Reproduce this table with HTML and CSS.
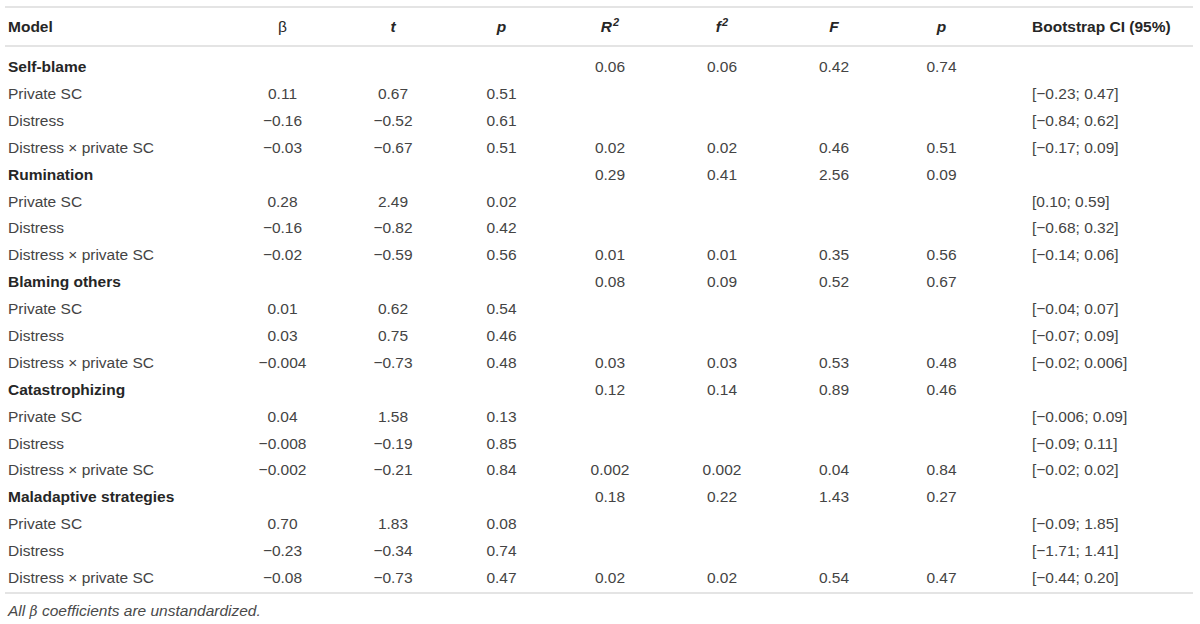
FILE: index.html
```html
<!DOCTYPE html>
<html>
<head>
<meta charset="utf-8">
<link rel="stylesheet" href="styles.css">
</head>
<body>
<div class="wrap">
<table class="tbl">
<colgroup>
<col class="c-model"><col class="c-b"><col class="c-t"><col class="c-p"><col class="c-r"><col class="c-f2"><col class="c-F"><col class="c-p2"><col class="c-ci">
</colgroup>
<thead>
<tr>
<th class="l">Model</th><th class="reg">β</th><th class="it">t</th><th class="it">p</th><th class="it">R<sup>2</sup></th><th class="it">f<sup>2</sup></th><th class="it">F</th><th class="it">p</th><th class="ci">Bootstrap CI (95%)</th>
</tr>
</thead>
<tbody>
<tr class="grp first"><td class="l">Self-blame</td><td></td><td></td><td></td><td>0.06</td><td>0.06</td><td>0.42</td><td>0.74</td><td class="ci"></td></tr>
<tr><td class="l">Private SC</td><td>0.11</td><td>0.67</td><td>0.51</td><td></td><td></td><td></td><td></td><td class="ci">[−0.23; 0.47]</td></tr>
<tr><td class="l">Distress</td><td>−0.16</td><td>−0.52</td><td>0.61</td><td></td><td></td><td></td><td></td><td class="ci">[−0.84; 0.62]</td></tr>
<tr><td class="l">Distress × private SC</td><td>−0.03</td><td>−0.67</td><td>0.51</td><td>0.02</td><td>0.02</td><td>0.46</td><td>0.51</td><td class="ci">[−0.17; 0.09]</td></tr>
<tr class="grp"><td class="l">Rumination</td><td></td><td></td><td></td><td>0.29</td><td>0.41</td><td>2.56</td><td>0.09</td><td class="ci"></td></tr>
<tr><td class="l">Private SC</td><td>0.28</td><td>2.49</td><td>0.02</td><td></td><td></td><td></td><td></td><td class="ci">[0.10; 0.59]</td></tr>
<tr><td class="l">Distress</td><td>−0.16</td><td>−0.82</td><td>0.42</td><td></td><td></td><td></td><td></td><td class="ci">[−0.68; 0.32]</td></tr>
<tr><td class="l">Distress × private SC</td><td>−0.02</td><td>−0.59</td><td>0.56</td><td>0.01</td><td>0.01</td><td>0.35</td><td>0.56</td><td class="ci">[−0.14; 0.06]</td></tr>
<tr class="grp"><td class="l">Blaming others</td><td></td><td></td><td></td><td>0.08</td><td>0.09</td><td>0.52</td><td>0.67</td><td class="ci"></td></tr>
<tr><td class="l">Private SC</td><td>0.01</td><td>0.62</td><td>0.54</td><td></td><td></td><td></td><td></td><td class="ci">[−0.04; 0.07]</td></tr>
<tr><td class="l">Distress</td><td>0.03</td><td>0.75</td><td>0.46</td><td></td><td></td><td></td><td></td><td class="ci">[−0.07; 0.09]</td></tr>
<tr><td class="l">Distress × private SC</td><td>−0.004</td><td>−0.73</td><td>0.48</td><td>0.03</td><td>0.03</td><td>0.53</td><td>0.48</td><td class="ci">[−0.02; 0.006]</td></tr>
<tr class="grp"><td class="l">Catastrophizing</td><td></td><td></td><td></td><td>0.12</td><td>0.14</td><td>0.89</td><td>0.46</td><td class="ci"></td></tr>
<tr><td class="l">Private SC</td><td>0.04</td><td>1.58</td><td>0.13</td><td></td><td></td><td></td><td></td><td class="ci">[−0.006; 0.09]</td></tr>
<tr><td class="l">Distress</td><td>−0.008</td><td>−0.19</td><td>0.85</td><td></td><td></td><td></td><td></td><td class="ci">[−0.09; 0.11]</td></tr>
<tr><td class="l">Distress × private SC</td><td>−0.002</td><td>−0.21</td><td>0.84</td><td>0.002</td><td>0.002</td><td>0.04</td><td>0.84</td><td class="ci">[−0.02; 0.02]</td></tr>
<tr class="grp"><td class="l">Maladaptive strategies</td><td></td><td></td><td></td><td>0.18</td><td>0.22</td><td>1.43</td><td>0.27</td><td class="ci"></td></tr>
<tr><td class="l">Private SC</td><td>0.70</td><td>1.83</td><td>0.08</td><td></td><td></td><td></td><td></td><td class="ci">[−0.09; 1.85]</td></tr>
<tr><td class="l">Distress</td><td>−0.23</td><td>−0.34</td><td>0.74</td><td></td><td></td><td></td><td></td><td class="ci">[−1.71; 1.41]</td></tr>
<tr class="last"><td class="l">Distress × private SC</td><td>−0.08</td><td>−0.73</td><td>0.47</td><td>0.02</td><td>0.02</td><td>0.54</td><td>0.47</td><td class="ci">[−0.44; 0.20]</td></tr>
</tbody>
</table>
<p class="note">All <span class="beta">β</span> coefficients are unstandardized.</p>
</div>
</body>
</html>
```
FILE: styles.css
```css
html, body {
  margin: 0;
  padding: 0;
  background: #ffffff;
}
body {
  font-family: "Liberation Sans", Arial, sans-serif;
  color: #444444;
  font-size: 15.5px;
}
.wrap {
  padding: 6px 7px 0 5px;
}
.tbl {
  width: 1188px;
  table-layout: fixed;
  border-collapse: collapse;
  border-top: 2px solid #e4e4e4;
  border-bottom: 2px solid #e4e4e4;
}
.c-model { width: 222px; }
.c-b { width: 111px; }
.c-t { width: 110px; }
.c-p { width: 107px; }
.c-r { width: 110px; }
.c-f2 { width: 114px; }
.c-F { width: 110px; }
.c-p2 { width: 105px; }
.c-ci { width: 199px; }
th {
  height: 37px;
  padding: 0;
  font-weight: bold;
  color: #262626;
  text-align: center;
  border-bottom: 2px solid #e4e4e4;
  vertical-align: middle;
}
th.reg { font-weight: normal; }
th.it { font-style: italic; }
th sup {
  font-size: 11px;
  line-height: 0;
  vertical-align: 6px;
  margin-left: 1px;
}
td {
  height: 26.9px;
  padding: 0;
  text-align: center;
  vertical-align: middle;
  white-space: nowrap;
}
.l {
  text-align: left;
  padding-left: 3px;
}
.ci {
  text-align: left;
  padding-left: 38px;
}
.grp td.l {
  font-weight: bold;
  color: #262626;
}
.first td {
  height: 26.5px;
  padding-top: 7px;
}
.last td {
  height: 27.5px;
}
.note {
  margin: 0;
  padding: 8px 0 0 3px;
  font-size: 15.5px;
  font-style: italic;
  color: #4a4a4a;
}
.beta {
  font-family: "DejaVu Serif", serif;
  font-size: 14px;
}
```
